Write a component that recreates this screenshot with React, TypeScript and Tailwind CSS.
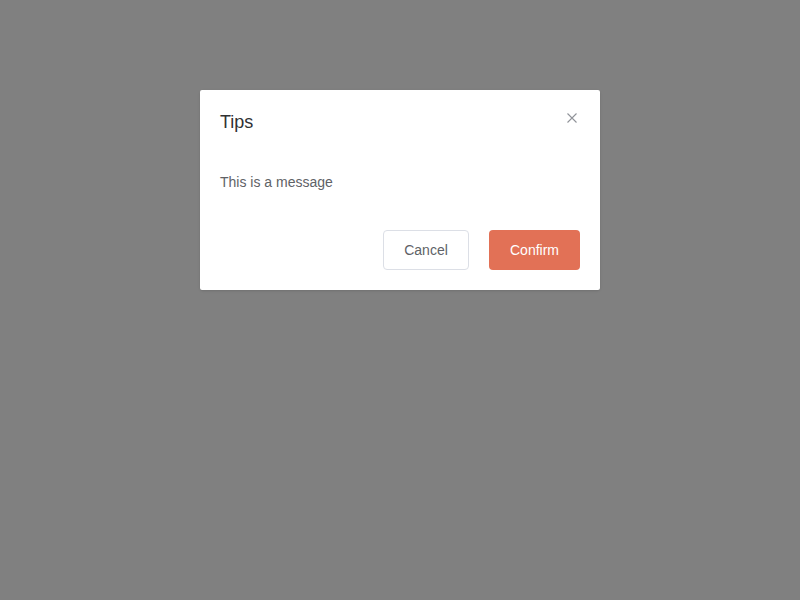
export default function App() {
  return (
    <div
      className="w-[800px] h-[600px] bg-[#808080] flex justify-center items-start pt-[90px]"
      style={{ fontFamily: '"Liberation Sans", Arial, sans-serif' }}
    >
      <div className="w-[400px] h-[200px] bg-white rounded-[2px] shadow-sm flex flex-col px-5 pt-5 pb-5">
        <div className="flex items-start justify-between">
          <div className="text-[18px] leading-6 text-[#303133]">Tips</div>
          <button type="button" className="mt-[3px] mr-[3px] w-[10px] h-[10px] flex items-center justify-center text-[#909399]">
            <svg width="10" height="10" viewBox="0 0 10 10" fill="none" stroke="currentColor" strokeWidth="1.1">
              <path d="M0.5 0.5L9.5 9.5M9.5 0.5L0.5 9.5" />
            </svg>
          </button>
        </div>
        <div className="mt-[38px] text-[14px] leading-[21px] text-[#606266]">This is a message</div>
        <div className="mt-auto flex justify-end gap-5">
          <button
            type="button"
            className="w-[86px] h-10 border border-[#dcdfe6] rounded text-[14px] text-[#606266] bg-white"
          >
            Cancel
          </button>
          <button
            type="button"
            className="w-[91px] h-10 rounded text-[14px] text-white bg-[#e27156]"
          >
            Confirm
          </button>
        </div>
      </div>
    </div>
  );
}
